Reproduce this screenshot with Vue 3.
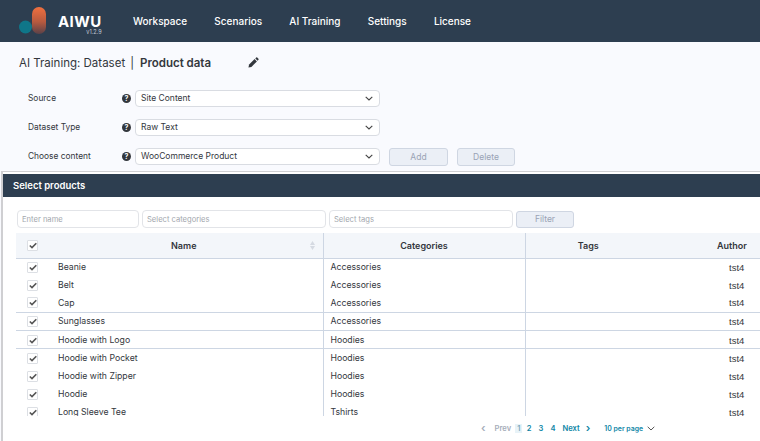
<script setup>
const nav = ["Workspace", "Scenarios", "AI Training", "Settings", "License"];

const fields = [
  { label: "Source", value: "Site Content" },
  { label: "Dataset Type", value: "Raw Text" },
  { label: "Choose content", value: "WooCommerce Product" },
];

const products = [
  { name: "Beanie", category: "Accessories" },
  { name: "Belt", category: "Accessories" },
  { name: "Cap", category: "Accessories", line: true },
  { name: "Sunglasses", category: "Accessories", line: true },
  { name: "Hoodie with Logo", category: "Hoodies", line: true },
  { name: "Hoodie with Pocket", category: "Hoodies" },
  { name: "Hoodie with Zipper", category: "Hoodies" },
  { name: "Hoodie", category: "Hoodies" },
  { name: "Long Sleeve Tee", category: "Tshirts" },
];
</script>

<template>
  <div class="page">
    <header class="topbar">
      <div class="logo">
        <svg width="40" height="34" viewBox="0 0 40 34">
          <defs>
            <linearGradient id="pill" x1="0" y1="0" x2="0" y2="1">
              <stop offset="0" stop-color="#f0703f" />
              <stop offset="0.55" stop-color="#b75a3f" />
              <stop offset="1" stop-color="#5a4148" />
            </linearGradient>
          </defs>
          <rect x="13" y="7" width="14" height="27" rx="7" fill="url(#pill)" />
          <circle cx="6.5" cy="27" r="6.5" fill="#0f7689" />
        </svg>
        <div class="brand">
          <span class="brand-name">AIWU</span>
          <span class="brand-ver">v1.2.9</span>
        </div>
      </div>
      <nav class="nav">
        <a v-for="item in nav" :key="item">{{ item }}</a>
      </nav>
    </header>

    <div class="title-row">
      <span>AI Training: Dataset</span>
      <span class="sep">|</span>
      <b>Product data</b>
      <svg class="pencil" width="11" height="11" viewBox="0 0 12 12">
        <path d="M0.5 11.5l0.7-3.2 6-6 2.5 2.5-6 6z" fill="#33373d" />
        <path d="M8 1.5l0.9-0.9a0.8 0.8 0 0 1 1.1 0l1.4 1.4a0.8 0.8 0 0 1 0 1.1l-0.9 0.9z" fill="#33373d" />
      </svg>
    </div>

    <div class="form">
      <div v-for="(f, i) in fields" :key="f.label" class="form-row">
        <label>{{ f.label }}</label>
        <span class="help">?</span>
        <div class="select">
          <span>{{ f.value }}</span>
          <svg width="8" height="5" viewBox="0 0 8 5">
            <path d="M0.7 0.8L4 4l3.3-3.2" fill="none" stroke="#444" stroke-width="1.1" />
          </svg>
        </div>
        <template v-if="i === 2">
          <button class="btn add" disabled>Add</button>
          <button class="btn del" disabled>Delete</button>
        </template>
      </div>
    </div>

    <section class="card">
      <h2 class="card-head">Select products</h2>
      <div class="filters">
        <input class="inp name" placeholder="Enter name" />
        <input class="inp cats" placeholder="Select categories" />
        <input class="inp tags" placeholder="Select tags" />
        <button class="btn filter" disabled>Filter</button>
      </div>

      <div class="table-wrap">
        <table>
          <colgroup>
            <col class="c-check" />
            <col class="c-name" />
            <col class="c-cat" />
            <col class="c-tags" />
            <col class="c-author" />
          </colgroup>
          <thead>
            <tr>
              <th><span class="check">
                <svg width="8" height="7" viewBox="0 0 8 7"><path d="M0.8 3.5L3 5.6 7.3 1.2" fill="none" stroke="#555" stroke-width="1.6" /></svg>
              </span></th>
              <th class="name-th">Name
                <svg class="sort" width="5" height="9" viewBox="0 0 5 9">
                  <path d="M2.5 0L5 4H0zM2.5 9L0 5h5z" fill="#d5dae2" />
                </svg>
              </th>
              <th>Categories</th>
              <th class="tags-th">Tags</th>
              <th class="author-th">Author</th>
            </tr>
          </thead>
          <tbody>
            <tr v-for="p in products" :key="p.name" :class="{ line: p.line }">
              <td class="mid"><span class="check">
                <svg width="8" height="7" viewBox="0 0 8 7"><path d="M0.8 3.5L3 5.6 7.3 1.2" fill="none" stroke="#555" stroke-width="1.6" /></svg>
              </span></td>
              <td class="prod">{{ p.name }}</td>
              <td class="cat">{{ p.category }}</td>
              <td class="tag"></td>
              <td class="author">tst4</td>
            </tr>
          </tbody>
        </table>
      </div>

      <div class="pager">
        <span class="off arrow">‹</span>
        <span class="off prev">Prev</span>
        <span class="cur">1</span>
        <a>2</a>
        <a>3</a>
        <a>4</a>
        <a class="next">Next</a>
        <a class="arrow">›</a>
        <a class="per">10 per page</a>
        <svg width="8" height="5" viewBox="0 0 8 5">
          <path d="M0.7 0.8L4 4l3.3-3.2" fill="none" stroke="#555" stroke-width="1" />
        </svg>
      </div>
    </section>
  </div>
</template>

<style scoped>
.page {
  width: 760px;
  height: 441px;
  overflow: hidden;
  background: #f9fafe;
  font-family: Inter, "Noto Sans", sans-serif;
  color: #33373d;
}

.topbar {
  height: 42px;
  background: #2d3e50;
  display: flex;
  align-items: center;
  color: #fff;
}
.logo {
  display: flex;
  width: 133px;
  padding-left: 19px;
  box-sizing: border-box;
  height: 42px;
  align-items: flex-start;
}
.brand {
  display: flex;
  flex-direction: column;
  align-items: flex-end;
  margin: 16px 0 0 -1px;
}
.brand-name {
  font-size: 15px;
  font-weight: 700;
  line-height: 12px;
  letter-spacing: 0.4px;
}
.brand-ver {
  font-size: 5.5px;
  line-height: 5px;
  margin-top: 2px;
  color: #c5ccd6;
}
.nav {
  display: flex;
  gap: 27.2px;
  font-size: 10px;
  font-weight: 500;
}

.title-row {
  display: flex;
  align-items: center;
  height: 42px;
  padding: 0 0 1px 19px;
  box-sizing: border-box;
  font-size: 11.5px;
}
.title-row b {
  font-weight: 600;
}
.sep {
  margin: 0 6px 0 5px;
  color: #33373d;
}
.pencil {
  margin-left: 37px;
}

.form {
  display: flex;
  flex-direction: column;
  gap: 12px;
  padding: 6px 0 0 28px;
}
.form-row {
  display: flex;
  align-items: center;
  height: 17px;
}
.form-row label {
  width: 94px;
  padding-bottom: 2px;
  font-size: 8.4px;
}
.help {
  width: 9px;
  height: 9px;
  border-radius: 50%;
  background: #33373d;
  color: #fff;
  font-size: 7px;
  font-weight: 700;
  line-height: 9px;
  text-align: center;
  margin-right: 4px;
}
.select {
  width: 245px;
  height: 17px;
  box-sizing: border-box;
  background: #fff;
  border: 1px solid #d9dce2;
  border-radius: 4px;
  display: flex;
  align-items: center;
  justify-content: space-between;
  padding: 0 6px 0 5px;
  font-size: 8.5px;
}
.select span {
  padding-bottom: 1px;
}

.btn {
  height: 18px;
  box-sizing: border-box;
  padding: 0 0 1px;
  background: #ebeff6;
  border: 1px solid #cfd6e2;
  border-radius: 3px;
  color: #9aa3b5;
  font-family: inherit;
  font-size: 8.5px;
}
.add {
  width: 59px;
  margin: 1px 0 0 9px;
}
.del {
  width: 58px;
  margin: 1px 0 0 9px;
}

.card {
  margin: 6px 0 0 1px;
  border-left: 2px solid #cfcfd2;
  border-top: 1px solid #cfcfd2;
  padding-top: 2px;
  background: #fff;
  height: 280px;
  box-sizing: border-box;
}
.card-head {
  margin: 0;
  height: 23px;
  line-height: 23px;
  padding-left: 10px;
  background: #2d3e50;
  color: #fff;
  font-size: 9.5px;
  font-weight: 600;
}

.filters {
  display: flex;
  align-items: center;
  height: 18px;
  margin-top: 13px;
  padding-left: 14px;
}
.inp {
  height: 18px;
  box-sizing: border-box;
  border: 1px solid #e2e4e8;
  border-radius: 4px;
  background: #fff;
  padding: 0 4px;
  font-family: inherit;
  font-size: 7.6px;
  outline: none;
}
.inp::placeholder {
  color: #a3a7ae;
}
.name {
  width: 122px;
}
.cats {
  width: 184px;
  margin-left: 3px;
}
.tags {
  width: 184px;
  margin-left: 3px;
}
.filter {
  width: 58px;
  height: 17px;
  margin-left: 3px;
}

.table-wrap {
  margin: 5px 0 0 13px;
  height: 183px;
  overflow: hidden;
}
table {
  width: 760px;
  table-layout: fixed;
  border-collapse: collapse;
  font-size: 8.7px;
}
.c-check {
  width: 38px;
}
.c-name {
  width: 269px;
}
.c-cat {
  width: 202px;
}
.c-tags {
  width: 148px;
}
.c-author {
  width: 103px;
}
thead tr {
  height: 25px;
  background: #f3f6fa;
  border-bottom: 1px solid #cdd6e3;
}
th {
  font-weight: 600;
  font-size: 9px;
  text-align: center;
  position: relative;
  padding: 0;
}
th:nth-child(2),
th:nth-child(3),
td:nth-child(2),
td:nth-child(3) {
  border-right: 1px solid #cdd6e3;
}
th:first-child,
.mid {
  text-align: left;
  padding-left: 11px;
}
.name-th {
  padding-right: 9px;
}
.tags-th {
  padding-right: 22px;
}
.author-th {
  text-align: left;
  padding-left: 44px;
}
.sort {
  position: absolute;
  right: 8px;
  top: 8px;
}
tbody tr {
  height: 18px;
}
tbody tr.line {
  border-bottom: 1px solid #cdd6e3;
}
td {
  padding: 0;
  overflow: hidden;
  white-space: nowrap;
}
tbody tr:nth-child(n + 5) td {
  padding-top: 2px;
}
.prod {
  padding-left: 4px;
}
.cat {
  padding-left: 7px;
}
.author {
  font-family: "Liberation Sans", sans-serif;
  font-size: 9.5px;
  padding-left: 56px;
}
.check {
  width: 11px;
  height: 11px;
  box-sizing: border-box;
  border: 1px solid #dcdfe4;
  border-radius: 1px;
  background: #fff;
  display: flex;
  align-items: center;
  justify-content: center;
}

.pager {
  display: flex;
  align-items: center;
  height: 24px;
  padding-left: 478px;
  color: #0f86a6;
  font-size: 7.6px;
  font-weight: 600;
}
.pager > * {
  margin-right: 7px;
}
.off {
  color: #a6adba;
}
.pager .prev {
  margin-right: 4px;
}
.pager .cur {
  background: #e8f3f8;
  padding: 0 2px;
  margin-right: 4.5px;
  color: #7fa9bb;
}
.pager .next {
  margin-right: 6px;
}
.pager .arrow {
  font-size: 11px;
  margin-right: 9px;
  line-height: 10px;
}
.pager .per {
  margin: 0 4px 0 5px;
  font-size: 6.9px;
}
</style>
